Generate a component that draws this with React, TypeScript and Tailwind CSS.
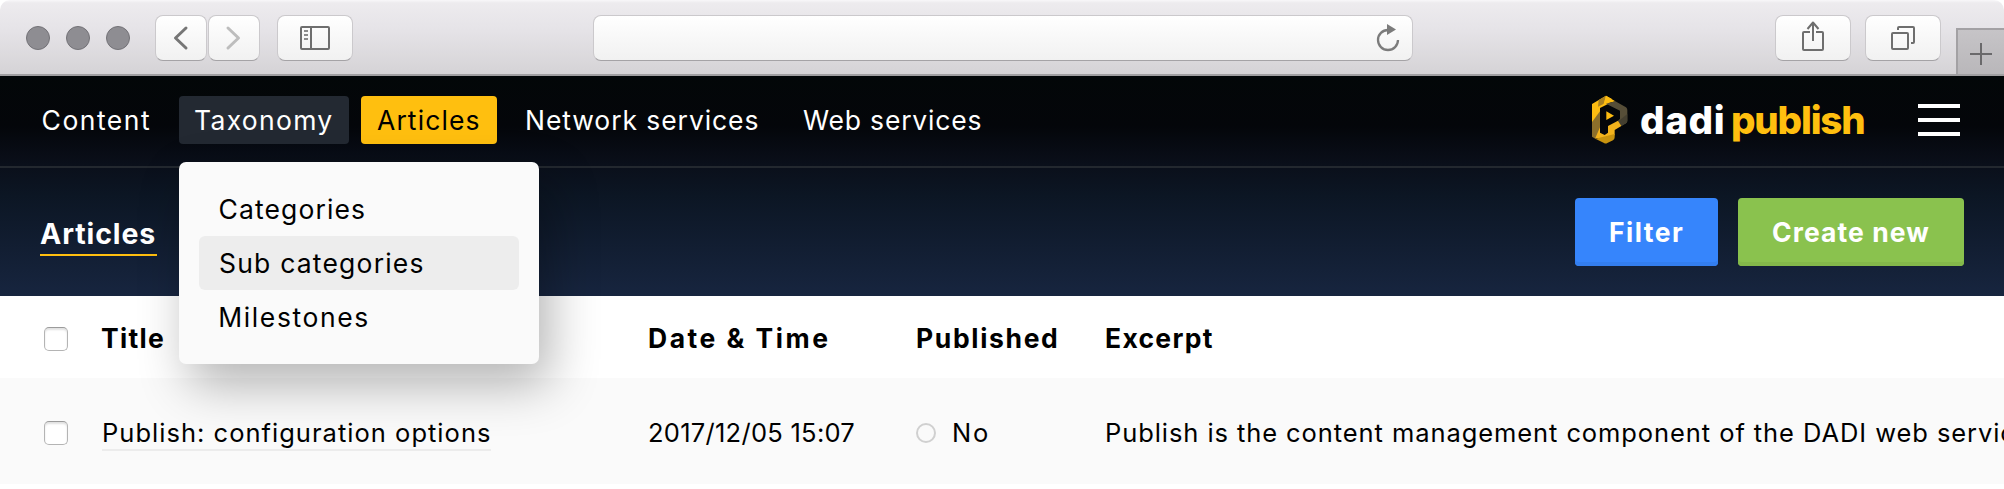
import React from "react";

const chromeButton =
  "flex h-[46px] shrink-0 items-center justify-center rounded-[8px] border border-[#cbc9cc] border-b-[#a5a3a6] bg-gradient-to-b from-white to-[#f1f1f1]";

function BrowserBar() {
  return (
    <div className="h-[76px] bg-white">
      <div className="flex h-[76px] items-start rounded-t-[10px] border-b-2 border-[#a09fa1] bg-[linear-gradient(to_bottom,#f8f7f9_0px,#edebee_3px,#e6e4e8_28px,#d5d3d6_74px)] pt-[15px]">
        <div className="ml-[26px] mt-[11px] flex gap-4">
          {[0, 1, 2].map((i) => (
            <span key={i} className="size-6 rounded-full border border-[#737277] bg-[#8e8d92]" />
          ))}
        </div>
        <div className="ml-[25px] flex gap-px">
          <div className={`${chromeButton} w-[52px]`}>
            <svg width="52" height="46" viewBox="0 0 52 46" className="shrink-0" fill="none" stroke="#767676" strokeWidth="3" strokeLinecap="round" strokeLinejoin="round">
              <path d="M31 13 L20.500 23 L31 33" />
            </svg>
          </div>
          <div className={`${chromeButton} w-[52px]`}>
            <svg width="52" height="46" viewBox="0 0 52 46" className="shrink-0" fill="none" stroke="#bdbdbd" strokeWidth="3" strokeLinecap="round" strokeLinejoin="round">
              <path d="M20 13 L30.500 23 L20 33" />
            </svg>
          </div>
        </div>
        <div className={`${chromeButton} ml-[17px] w-[76px]`}>
          <svg width="30" height="24" viewBox="0 0 30 24" fill="none" stroke="#6e6e6e" strokeWidth="2">
            <rect x="1" y="1" width="28" height="22" rx="1" />
            <path d="M11 1V23" />
            <path d="M4 5H8M4 9H8M4 13H8" stroke="#8c8c8c" />
          </svg>
        </div>
        <div className={`${chromeButton} ml-[240px] w-[820px] !justify-end pr-3`}>
          <svg width="24" height="28" viewBox="0 0 24 28" className="mb-px" fill="none">
            <path d="M12 6A10 10 0 1 0 22 16" stroke="#7b7b7b" strokeWidth="2.300" />
            <path d="M11 0L20 5.500L11 11Z" fill="#7b7b7b" />
          </svg>
        </div>
        <div className={`${chromeButton} ml-[362px] w-[76px]`}>
          <svg width="22" height="32" viewBox="0 0 22 32" className="mb-1" fill="none" stroke="#6e6e6e" strokeWidth="2" strokeLinejoin="round">
            <path d="M8 12H2Q1 12 1 13V29Q1 30 2 30H20Q21 30 21 29V13Q21 12 20 12H14" />
            <path d="M11 21V3M5.500 9L11 2.500L16.500 9" />
          </svg>
        </div>
        <div className={`${chromeButton} ml-[14px] w-[76px]`}>
          <svg width="24" height="24" viewBox="0 0 24 24" fill="none" stroke="#6e6e6e" strokeWidth="2">
            <rect x="1" y="7" width="16" height="16" rx="1" />
            <path d="M7 4V2Q7 1 8 1H22Q23 1 23 2V16Q23 17 22 17H20" />
          </svg>
        </div>
        <div className="ml-[15px] mt-[13px] flex h-[46px] flex-1 items-center border-l-2 border-t-2 border-[#a3a1a4] bg-gradient-to-b from-[#c6c4c7] to-[#b9b7ba] pl-3">
          <svg width="22" height="22" viewBox="0 0 22 22" className="mt-1" stroke="#6a696b" strokeWidth="2">
            <path d="M11 0V22M0 11H22" />
          </svg>
        </div>
      </div>
    </div>
  );
}

function HexMark() {
  return (
    <svg width="40" height="52" viewBox="18 12 120 156" className="shrink-0">
      <path d="M66 17L84 27L72 42L48 54L48 74L24 104V42Z" fill="#fdbc11" />
      <path d="M44 30L66 17L60 41L42 50Z" fill="#a98121" />
      <path d="M66 17L94 34L66 41L58 44Z" fill="#fdbc11" />
      <path d="M24 96L48 64V118L36 148L24 140Z" fill="#8c6f2b" />
      <path d="M94 34L126 52Q130 55 130 60V92Q130 97 126 100L112 108L102 92L108 86V62L66 41Z" fill="#564e38" />
      <path d="M130 72V92Q130 97 126 100L112 108L104 93Z" fill="#443f30" />
      <path d="M102 92L112 108L92 120V136L56 146L34 144L48 112V128L62 135L72 128V108Z" fill="#f3b31c" />
      <path d="M34 146L92 132V142Q92 148 87 151L70 159Q65 162 60 159Z" fill="#c8930f" />
      <path d="M67 64L90 77L67 90Z" fill="#fdbc11" />
    </svg>
  );
}

function Dropdown() {
  return (
    <div className="absolute left-0 top-[66px] z-10 w-[360px] rounded-[7px] bg-[#fafafa] p-5 text-black shadow-[10px_20px_50px_rgba(0,0,0,0.3)]">
      <div className="h-[54px] pl-[19.600px] leading-[54px] tracking-[1.100px]">Categories</div>
      <div className="h-[54px] rounded-[6px] bg-[#ededed] pl-5 leading-[54px] tracking-[1.200px]">Sub categories</div>
      <div className="h-[54px] pl-[19.300px] leading-[54px] tracking-[1.600px]">Milestones</div>
    </div>
  );
}

function TopNav() {
  return (
    <div className="flex h-[92px] items-start border-b-2 border-[#23282f] pt-5 text-white">
      <nav className="ml-[26px] flex gap-3 whitespace-nowrap leading-[49px]">
        <a className="w-[141px] pl-[15.600px] tracking-[1.480px]">Content</a>
        <div className="relative h-12 w-[170px] rounded-[4px] bg-[#232932] pl-[15px] tracking-[1.300px]">
          Taxonomy
          <Dropdown />
        </div>
        <a className="h-12 w-[136px] rounded-[4px] bg-[#ffbf0f] pl-4 tracking-[1.100px] text-black">Articles</a>
        <a className="w-[266px] pl-4 tracking-[0.920px]">Network services</a>
        <a className="pl-4 tracking-[0.800px]">Web services</a>
      </nav>
      <div className="ml-auto -mt-[2px] flex h-[52px] items-center">
        <HexMark />
        <div className="ml-[10px] flex whitespace-nowrap text-[38.500px] font-extrabold leading-[52px]">
          <span className="w-[91px] tracking-[0.700px]">dadi</span>
          <span className="w-[139px] tracking-[-1.200px] text-[#ffbf0f]">publish</span>
        </div>
      </div>
      <div className="ml-12 mr-11 mt-2 flex w-[42px] shrink-0 flex-col gap-[10px]">
        <span className="h-1 bg-white" />
        <span className="h-1 bg-white" />
        <span className="h-1 bg-white" />
      </div>
    </div>
  );
}

function SubHeader() {
  return (
    <div className="flex h-32 items-start pr-10 font-bold text-white">
      <h1 className="ml-10 mt-[46px] w-[117px] border-b-2 border-[#ffbf0f] text-[28.500px] leading-[40px] tracking-[0.900px]">
        Articles
      </h1>
      <div className="ml-auto mt-[30px] flex gap-5 leading-[69px]">
        <button className="h-[68px] w-[143px] rounded-[4px] bg-[#3685fc] pl-[34px] text-left tracking-[1.500px] shadow-[inset_0_-4px_0_#337eef]">
          Filter
        </button>
        <button className="h-[68px] w-[226px] rounded-[4px] bg-[#8ac24e] pl-[34px] text-left tracking-[1.080px] shadow-[inset_0_-4px_0_#83b84a]">
          Create new
        </button>
      </div>
    </div>
  );
}

function Checkbox() {
  return (
    <span className="block h-6 w-6 rounded-[5px] border border-[#b4b4b4] border-t-[#9b9b9b] bg-white shadow-[inset_0_2px_2px_rgba(0,0,0,0.12)]" />
  );
}

const columns = "grid grid-cols-[58px_547px_267px_189px_1fr] whitespace-nowrap pl-11";

function Table() {
  return (
    <div className="overflow-hidden bg-white text-black">
      <div className={`${columns} h-[82px] font-bold leading-[85px]`}>
        <div className="pt-[31px]"><Checkbox /></div>
        <div className="-ml-px tracking-[1.300px]">Title</div>
        <div className="-ml-px tracking-[2.500px]">Date &amp; Time</div>
        <div className="tracking-[1.650px]">Published</div>
        <div className="tracking-[1.280px]">Excerpt</div>
      </div>
      <div className={`${columns} h-[106px] bg-[#fafafa] pt-[38px] text-[25.500px] leading-[33px]`}>
        <div className="pt-[5px]"><Checkbox /></div>
        <div>
          <span className="block w-[389px] border-b-2 border-[#ececec] tracking-[1.020px]">
            Publish: configuration options
          </span>
        </div>
        <div className="-ml-px tracking-[0.270px]">2017/12/05 15:07</div>
        <div className="flex">
          <span className="mt-[7px] size-5 rounded-full border-2 border-[#d0d0d0]" />
          <span className="ml-4 tracking-[1.900px]">No</span>
        </div>
        <div className="tracking-[0.920px]">
          Publish is the content management component of the DADI web services
        </div>
      </div>
    </div>
  );
}

export default function App() {
  return (
    <div className="h-[489px] w-[2004px] overflow-hidden bg-white font-['Inter',sans-serif] text-[26.500px]">
      <BrowserBar />
      <header className="relative bg-[linear-gradient(to_bottom,#030708_0px,#04060a_50px,#0a0f1a_88px,#0c1624_120px,#17253f_220px)]">
        <TopNav />
        <SubHeader />
      </header>
      <Table />
    </div>
  );
}
